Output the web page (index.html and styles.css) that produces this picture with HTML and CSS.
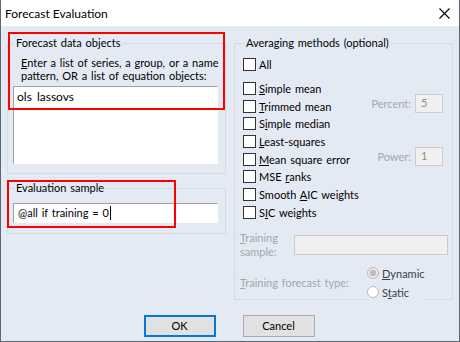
FILE: index.html
```html
<!DOCTYPE html>
<html lang="en">
<head>
  <meta charset="UTF-8">
  <title>Forecast Evaluation</title>
  <link rel="stylesheet" href="styles.css">
</head>
<body>
  <div class="window">
    <!-- Title bar -->
    <div class="titlebar">
      <span class="title">Forecast Evaluation</span>
      <svg class="close" width="11" height="11" viewBox="0 0 11 11">
        <path d="M0.5 0.5 L10.5 10.5 M10.5 0.5 L0.5 10.5" stroke="#000" stroke-width="1.1" fill="none"/>
      </svg>
    </div>
    <!-- Dialog body -->
    <div class="client">
      <div class="panes">
        <div class="col-left">
          <fieldset class="group objects">
            <legend>Forecast data objects</legend>
            <p class="hint"><u>E</u>nter a list of series, a group, or a name<br>pattern, OR a list of equation objects:</p>
            <div class="edit edit-multi">ols lassovs</div>
          </fieldset>
          <fieldset class="group sample">
            <legend>Evaluation sample</legend>
            <div class="edit">@all if training = 0<span class="caret"></span></div>
          </fieldset>
        </div>
        <fieldset class="group methods">
          <legend>Averaging methods (optional)</legend>
          <div class="check-row row-all"><span class="box"></span><span>All</span></div>
          <div class="check-row"><span class="box"></span><span><u>S</u>imple mean</span></div>
          <div class="check-row">
            <span class="box"></span><span><u>T</u>rimmed mean</span>
            <span class="param"><span>Percent:</span><span class="edit edit-off">5</span></span>
          </div>
          <div class="check-row"><span class="box"></span><span>S<u>i</u>mple median</span></div>
          <div class="check-row"><span class="box"></span><span><u>L</u>east-squares</span></div>
          <div class="check-row">
            <span class="box"></span><span><u>M</u>ean square error</span>
            <span class="param"><span>Power:</span><span class="edit edit-off">1</span></span>
          </div>
          <div class="check-row"><span class="box"></span><span>MSE <u>r</u>anks</span></div>
          <div class="check-row"><span class="box"></span><span>Smooth <u>A</u>IC weights</span></div>
          <div class="check-row"><span class="box"></span><span>S<u>I</u>C weights</span></div>
          <div class="train-sample">
            <span class="off-label"><u>T</u>raining<br>sample:</span>
            <span class="edit edit-off wide"></span>
          </div>
          <div class="train-type">
            <span class="off-label type-label"><u>T</u>raining forecast type:</span>
            <div class="radios">
              <div class="radio-row"><span class="radio checked"></span><span><u>D</u>ynamic</span></div>
              <div class="radio-row"><span class="radio"></span><span>S<u>t</u>atic</span></div>
            </div>
          </div>
        </fieldset>
      </div>
      <div class="buttons">
        <button class="btn btn-default">OK</button>
        <button class="btn">Cancel</button>
      </div>
    </div>
    <!-- Red annotation frames -->
    <div class="annot annot-objects"></div>
    <div class="annot annot-sample"></div>
  </div>
</body>
</html>
```

FILE: styles.css
```css
* {
  box-sizing: border-box;
}
body {
  margin: 0;
  font-family: Lato, sans-serif;
  font-size: 12px;
  color: #000;
  background: #fff;
}
/* Window frame */
.window {
  position: relative;
  width: 460px;
  height: 342px;
  display: flex;
  flex-direction: column;
  border: 1px solid #5e6670;
  border-top: 0;
  background: #e4eaf3;
}
.titlebar {
  height: 26px;
  flex: none;
  display: flex;
  align-items: center;
  justify-content: space-between;
  padding: 0 9px 0 4px;
  background: #fff;
}
.close {
  display: block;
}
.client {
  flex: 1;
  padding: 10px 0 0 6px;
  font-size: 11px;
  word-spacing: 1px;
}
.panes {
  display: grid;
  grid-template-columns: 219px 219px;
  column-gap: 8px;
  align-items: start;
}
/* Group boxes */
fieldset {
  margin: 0;
  padding: 0;
  min-width: 0;
  border: 1px solid #d5dae1;
}
legend {
  padding: 0 2px;
  margin-left: 1px;
  line-height: 14px;
}
.objects {
  padding: 6px 7px 9px 5px;
}
.hint {
  margin: 0 0 4px;
  padding-left: 8px;
  line-height: 13px;
  white-space: nowrap;
}
.sample {
  margin-top: 7px;
  padding: 8px 7px 10px 5px;
}
/* Edit boxes */
.edit {
  display: block;
  height: 20px;
  padding: 2px 4px;
  line-height: 14px;
  white-space: nowrap;
  background: #fff;
  border: 1px solid;
  border-color: #a0a0a0 #fff #fff #a0a0a0;
}
.edit-multi {
  height: 78px;
  padding: 3px 3px;
  font-size: 12px;
  word-spacing: 2px;
}
.caret {
  display: inline-block;
  width: 1px;
  height: 14px;
  margin-left: 1px;
  vertical-align: top;
  background: #000;
}
.edit-off {
  width: 28px;
  height: 19px;
  padding: 1px 5px;
  color: #8c8c8c;
  background: #f0f0f0;
  border: 1px solid #cccccc;
}
/* Averaging methods */
.methods {
  padding: 6px 9px 0 8px;
}
.check-row {
  display: flex;
  align-items: center;
  height: 17.7px;
  white-space: nowrap;
}
.row-all {
  margin-bottom: 5.8px;
}
.box {
  flex: none;
  width: 13px;
  height: 13px;
  margin-right: 3px;
  background: #fff;
  border: 1px solid #333;
}
.param {
  margin-left: auto;
  margin-bottom: 5px;
  display: flex;
  align-items: center;
  gap: 4px;
  color: #a3a7ac;
}
.off-label {
  color: #a3a7ac;
}
.train-sample {
  display: flex;
  align-items: center;
  margin: 10px -5px 0 -3px;
}
.train-sample .off-label {
  width: 54px;
  line-height: 14px;
}
.train-sample .wide {
  flex: 1;
  width: auto;
  height: 20px;
}
.train-type {
  display: flex;
  align-items: center;
  margin: 5px 0 -3px -3px;
}
.type-label {
  width: 127px;
  white-space: nowrap;
}
.radios {
  width: 57px;
  background: #e4eaf3;
  color: #3c4148;
}
.radio-row {
  display: flex;
  align-items: center;
  height: 19px;
}
.radio {
  flex: none;
  width: 12px;
  height: 12px;
  margin-right: 3px;
  border: 1px solid #bcbcbc;
  border-radius: 50%;
  background: #fff;
}
.radio.checked {
  background: radial-gradient(circle, #bdbdbd 0 3px, #e8e8e8 3.5px);
}
/* Buttons */
.buttons {
  display: flex;
  justify-content: center;
  gap: 27px;
  margin-top: 15px;
  padding-right: 8px;
}
.btn {
  width: 72px;
  height: 22px;
  padding: 0;
  font-family: inherit;
  font-size: 11px;
  color: #000;
  background: #e1e1e1;
  border: 1px solid #adadad;
}
.btn-default {
  border: 2px solid #0078d7;
}
/* Annotation frames */
.annot {
  position: absolute;
  border: 2px solid #f00;
}
.annot-objects {
  left: 7px;
  top: 32px;
  width: 217px;
  height: 78px;
}
.annot-sample {
  left: 6px;
  top: 180px;
  width: 169px;
  height: 48px;
}
```
